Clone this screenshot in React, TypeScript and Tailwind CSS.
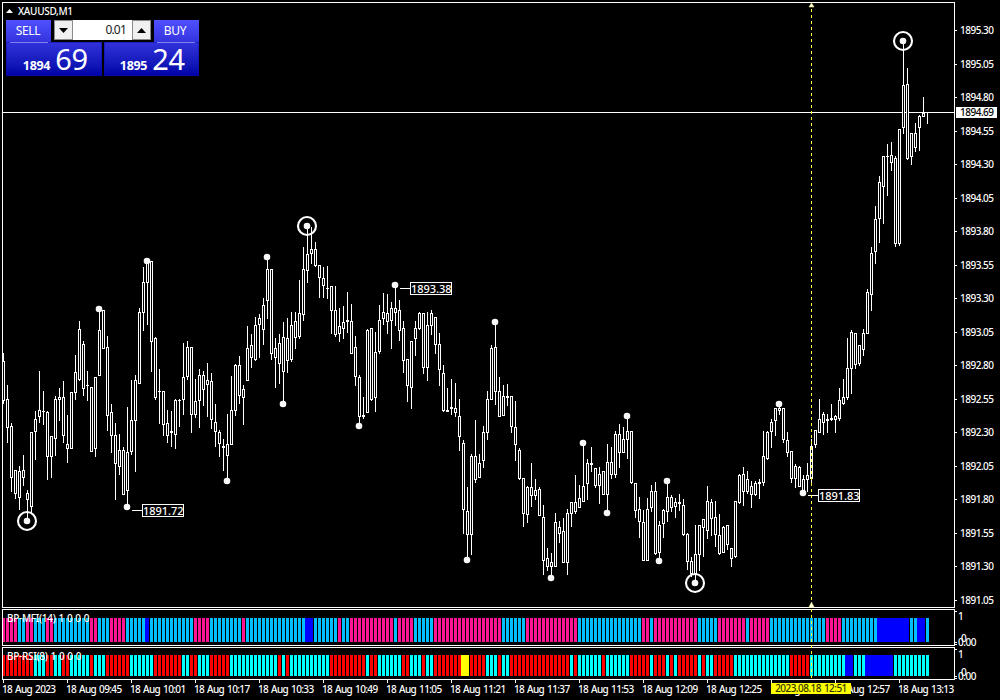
import { Fragment } from 'react';

const FIRST_X = 3;
const STEP = 4;

// [high, body top, body bottom, low] for each minute bar, in chart pixels
const candles: number[][] = [
  [353, 361, 400, 403], [385, 399, 427, 442], [423, 426, 477, 491], [470, 470, 493, 498],
  [466, 471, 497, 509], [455, 470, 477, 485], [490, 493, 499, 520], [432, 432, 506, 513],
  [411, 419, 431, 459], [371, 410, 416, 422], [391, 411, 411, 424], [411, 412, 456, 479],
  [436, 436, 456, 477], [396, 399, 438, 455], [388, 397, 399, 420], [381, 397, 435, 442],
  [415, 444, 448, 462], [392, 392, 448, 448], [355, 372, 392, 399], [321, 329, 379, 380],
  [341, 344, 388, 395], [371, 385, 385, 400], [387, 387, 451, 451], [377, 377, 448, 456],
  [310, 330, 375, 375], [310, 310, 348, 348], [336, 347, 415, 430], [404, 412, 435, 452],
  [423, 435, 463, 499], [434, 450, 466, 474], [447, 450, 494, 494], [407, 452, 490, 506],
  [380, 420, 451, 454], [375, 380, 420, 471], [308, 312, 383, 383], [267, 282, 312, 330],
  [261, 262, 282, 324], [261, 261, 341, 371], [337, 338, 397, 399], [369, 391, 391, 423],
  [391, 391, 424, 435], [410, 423, 435, 442], [411, 431, 432, 446], [399, 400, 434, 448],
  [399, 400, 400, 426], [343, 377, 399, 414], [341, 347, 376, 379], [347, 347, 414, 432],
  [379, 401, 414, 417], [369, 375, 400, 427], [371, 375, 389, 405], [363, 380, 384, 416],
  [373, 381, 419, 428], [404, 422, 431, 446], [430, 432, 443, 456], [439, 446, 447, 470],
  [414, 444, 455, 480], [376, 410, 444, 444], [364, 365, 410, 415], [356, 365, 395, 403],
  [385, 389, 397, 424], [326, 348, 380, 380], [334, 345, 357, 367], [317, 325, 359, 360],
  [314, 318, 324, 357], [298, 305, 329, 344], [257, 269, 300, 318], [269, 269, 353, 359],
  [338, 348, 357, 387], [334, 343, 363, 383], [322, 337, 371, 403], [318, 338, 360, 372],
  [312, 325, 359, 361], [312, 321, 337, 348], [280, 313, 336, 338], [247, 269, 314, 320],
  [227, 254, 270, 282], [227, 249, 253, 263], [242, 249, 265, 266], [265, 265, 277, 297],
  [267, 278, 285, 297], [266, 288, 288, 298], [286, 286, 310, 333], [286, 310, 334, 336],
  [308, 326, 333, 341], [306, 322, 328, 338], [292, 320, 321, 332], [304, 321, 353, 353],
  [336, 347, 376, 385], [375, 377, 416, 425], [397, 415, 416, 418], [329, 330, 412, 412],
  [328, 328, 399, 400], [332, 352, 397, 411], [305, 320, 351, 353], [293, 312, 318, 324],
  [294, 313, 321, 333], [302, 308, 320, 348], [285, 308, 312, 325], [300, 310, 330, 340],
  [321, 328, 360, 372], [359, 359, 385, 401], [341, 341, 387, 408], [321, 328, 338, 355],
  [312, 313, 328, 329], [313, 313, 367, 373], [312, 325, 367, 380], [310, 313, 325, 334],
  [317, 317, 344, 353], [333, 344, 369, 385], [365, 373, 410, 411], [388, 410, 411, 411],
  [379, 407, 408, 414], [383, 408, 412, 416], [399, 416, 436, 450], [440, 443, 509, 533],
  [487, 511, 534, 559], [454, 456, 534, 554], [420, 456, 479, 482], [454, 463, 477, 477],
  [426, 432, 460, 467], [391, 399, 432, 439], [345, 348, 399, 399], [322, 347, 391, 404],
  [377, 391, 416, 416], [385, 396, 415, 415], [384, 396, 397, 405], [396, 396, 426, 432],
  [401, 427, 444, 460], [448, 450, 478, 479], [478, 478, 513, 526], [486, 487, 514, 522],
  [463, 487, 495, 506], [479, 490, 495, 499], [487, 489, 515, 515], [505, 517, 560, 574],
  [548, 558, 566, 570], [553, 562, 566, 577], [513, 522, 566, 566], [521, 527, 533, 542],
  [518, 531, 562, 562], [509, 513, 562, 574], [502, 502, 513, 526], [475, 502, 511, 513],
  [485, 498, 507, 507], [443, 486, 501, 501], [459, 463, 483, 499], [447, 463, 464, 471],
  [468, 468, 485, 487], [467, 474, 485, 503], [471, 471, 494, 494], [444, 462, 494, 512],
  [447, 462, 474, 478], [431, 434, 474, 477], [424, 434, 452, 467], [427, 439, 452, 452],
  [416, 431, 439, 458], [431, 431, 482, 483], [483, 483, 510, 517], [497, 509, 521, 537],
  [510, 522, 560, 560], [498, 509, 560, 560], [485, 491, 507, 511], [482, 491, 553, 554],
  [521, 525, 552, 560], [509, 510, 523, 537], [481, 497, 511, 521], [495, 497, 507, 511],
  [498, 502, 506, 517], [494, 502, 503, 510], [499, 505, 534, 535], [533, 534, 561, 569],
  [557, 561, 573, 576], [525, 554, 573, 583], [525, 525, 554, 570], [519, 519, 527, 556],
  [486, 501, 530, 538], [499, 502, 518, 535], [501, 517, 534, 546], [514, 535, 553, 554],
  [526, 527, 552, 552], [525, 525, 544, 549], [548, 548, 558, 566], [501, 501, 556, 557],
  [474, 475, 502, 503], [467, 474, 491, 505], [471, 479, 491, 493], [481, 486, 494, 507],
  [481, 483, 494, 495], [479, 482, 483, 498], [431, 456, 482, 485], [431, 432, 458, 459],
  [419, 422, 431, 447], [408, 408, 420, 435], [405, 408, 410, 414], [408, 408, 439, 442],
  [432, 440, 452, 456], [451, 451, 478, 482], [464, 466, 478, 487], [466, 467, 486, 486],
  [475, 479, 490, 493], [463, 475, 479, 491], [439, 446, 478, 482], [430, 430, 444, 447],
  [399, 419, 432, 432], [412, 414, 422, 434], [414, 419, 420, 432], [404, 418, 419, 420],
  [415, 416, 419, 432], [388, 400, 418, 420], [379, 397, 403, 404], [338, 368, 397, 399],
  [330, 332, 368, 393], [333, 333, 364, 368], [345, 345, 363, 365], [329, 333, 349, 355],
  [289, 292, 333, 333], [247, 253, 294, 310], [206, 219, 251, 263], [176, 182, 218, 242],
  [156, 156, 186, 223], [144, 156, 156, 195], [142, 155, 162, 170], [156, 158, 243, 246],
  [129, 129, 243, 245], [42, 85, 127, 133], [68, 84, 158, 159], [133, 133, 156, 164],
  [123, 133, 147, 151], [115, 116, 127, 150], [97, 113, 116, 116], [112, 112, 112, 123],
];

const swings: [number, number, boolean?][] = [
  [27, 521, true], [99, 309], [127, 507], [147, 261], [227, 481], [267, 257], [283, 404],
  [307, 226, true], [359, 426], [395, 285], [467, 560], [495, 322], [551, 578], [583, 443],
  [607, 513], [627, 416], [659, 561], [667, 481], [695, 583, true], [779, 404], [803, 493],
  [903, 41, true],
];

const priceTags = [
  { x: 142, y: 504, text: '1891.72' },
  { x: 410, y: 282, text: '1893.38' },
  { x: 818, y: 489, text: '1891.83' },
];

// run-length encoded histogram colours
const MFI =
  'P4 S2 P2 S3 P2 S9 P2 S3 P4 S5 B1 S11 P4 S8 P1 S15 B2 S6 P1 S2 P11 S1 P4 S5 P17 S6 P13 S16 P2 S1 P11 S5 P7 S1 P5 S14 P4 S9 B8 S2 B2 S1';
const RSI =
  'R8 C3 R2 C2 R2 C5 R1 C3 R6 C6 R7 C2 R2 C3 R5 C12 R1 C1 R1 C10 R9 C1 R2 C6 R2 C3 R1 C2 R7 Y2 R4 C3 R1 C2 R15 C1 R1 C6 R1 C6 R5 C1 R3 C1 R1 C1 R5 C1 R1 C2 R5 C14 R5 C9 B2 C3 B7 C9';

const palette: Record<string, string> = {
  P: '#ff1493',
  S: '#00bfff',
  B: '#0000ff',
  R: '#ff0000',
  C: '#00ffff',
  Y: '#ffff00',
};

const prices = Array.from({ length: 18 }, (_, i) => (1895.3 - i * 0.25).toFixed(2));

const times = [
  '18 Aug 2023', '18 Aug 09:45', '18 Aug 10:01', '18 Aug 10:17', '18 Aug 10:33',
  '18 Aug 10:49', '18 Aug 11:05', '18 Aug 11:21', '18 Aug 11:37', '18 Aug 11:53',
  '18 Aug 12:09', '18 Aug 12:25', '18 Aug 12:41', '18 Aug 12:57', '18 Aug 13:13',
];

function decode(runs: string) {
  return runs.split(' ').flatMap((r) => Array(Number(r.slice(1))).fill(r[0]) as string[]);
}

function Histogram({ runs, top, y, height }: { runs: string; top: number; y: number; height: number }) {
  return (
    <svg className="block h-full w-full" viewBox={`3 ${top} 951 ${height + 11}`} preserveAspectRatio="xMinYMin slice" shapeRendering="crispEdges">
      {decode(runs).map((c, i) => {
        const wide = c === 'B' || c === 'Y';
        return (
          <rect
            key={i}
            x={FIRST_X + i * STEP - (wide ? 2 : 1)}
            y={y}
            width={wide ? 4 : 3}
            height={height}
            fill={palette[c]}
          />
        );
      })}
    </svg>
  );
}

function PriceChart() {
  return (
    <svg className="block" width="951" height="604" viewBox="3 3 951 604">
      <g shapeRendering="crispEdges" fill="#fff">
        <rect x="3" y="112" width="951" height="1" />
        {candles.map(([h, t, b, l], i) => {
          const x = FIRST_X + i * STEP;
          return (
            <Fragment key={i}>
              <rect x={x} y={h} width="1" height={l - h + 1} />
              <rect x={x - 1} y={t} width="3" height={b - t + 1} />
              {b - t > 1 && <rect x={x} y={t + 1} width="1" height={b - t - 1} fill="#000" />}
            </Fragment>
          );
        })}
      </g>
      {swings.map(([x, y, ring]) => (
        <g key={x}>
          <circle cx={x} cy={y} r="3.3" fill="#f8f8f8" />
          {ring && <circle cx={x} cy={y} r="9" fill="none" stroke="#fff" strokeWidth="2.1" />}
        </g>
      ))}
      {priceTags.map(({ x, y, text }) => (
        <g key={text}>
          <rect x={x - 10} y={y + 6} width="10" height="1" fill="#fff" />
          <rect x={x + 0.5} y={y + 0.5} width="41" height="12" fill="#000" stroke="#fff" />
          <text x={x + 1} y={y + 11} fontSize="11" textLength="40" fill="#fff">
            {text}
          </text>
        </g>
      ))}
    </svg>
  );
}

function Spin({ up }: { up?: boolean }) {
  return (
    <button className="flex h-5 w-[19px] items-center justify-center border border-[#8c8c8c] bg-[#f0f0f0]">
      <svg width="9" height="5" viewBox="0 0 9 5">
        <path d={up ? 'M0 5L4.5 0L9 5Z' : 'M0 0L4.5 5L9 0Z'} fill="#000" />
      </svg>
    </button>
  );
}

function Quote({ small, big }: { small: string; big: string }) {
  return (
    <div className="flex h-[34px] items-baseline justify-end bg-linear-to-b from-[#3232dc] to-[#0000a6] pr-[14px] shadow-[inset_0_0_0_1px_#0c0cae80]">
      <span className="mr-[5px] text-[12.5px] font-bold tracking-[-0.3px]">{small}</span>
      <span className="text-[29px] leading-[34px] tracking-[-0.2px]">{big}</span>
    </div>
  );
}

function TradePanel() {
  return (
    <div className="absolute top-[17px] left-[3px] w-[193px] font-normal text-white">
      <div className="flex h-[22px] justify-between">
        <button className="w-[45px] bg-linear-to-b from-[#5050ff] to-[#3434de] pr-px text-center text-xs leading-[22px] tracking-[-0.3px]">SELL</button>
        <div className="flex h-5 bg-white">
          <Spin />
          <div className="w-[59px] pr-[6px] text-right text-[12px] leading-[20px] tracking-[-0.8px] text-[#222]">0.01</div>
          <Spin up />
        </div>
        <button className="w-[45px] bg-linear-to-b from-[#5050ff] to-[#3434de] pr-[3px] text-center text-xs leading-[22px] tracking-[-0.3px]">BUY</button>
      </div>
      <div className="grid grid-cols-[96px_95px] gap-[2px]">
        <Quote small="1894" big="69" />
        <Quote small="1895" big="24" />
      </div>
      <div className="absolute top-[22px] left-1 h-px w-[38px] bg-[#8080f4]" />
      <div className="absolute top-[22px] right-1 h-px w-[38px] bg-[#8080f4]" />
    </div>
  );
}

function Scale() {
  return (
    <div className="relative flex-1 text-white">
      <span className="absolute top-px left-[3px] leading-[13px]">1</span>
      <span className="absolute bottom-px left-[6px] leading-[13px]">0</span>
      <span className="absolute bottom-[-3px] left-[3px] leading-[13px]">0.00</span>
      <div className="absolute top-[2px] left-0 h-px w-[2px] bg-white" />
      <div className="absolute bottom-[3px] left-0 h-px w-[2px] bg-white" />
      <div className="absolute bottom-[1px] left-0 h-px w-[2px] bg-white" />
    </div>
  );
}

export default function App() {
  return (
    <div className="relative h-[700px] w-[1000px] overflow-hidden bg-black pt-[2px] pl-[2px] font-['Noto_Sans',sans-serif] text-[10px] font-medium tracking-[-0.5px] text-white">
      <div className="flex h-[606px]">
        <div className="relative w-[953px] border border-white">
          <PriceChart />
          <div className="absolute top-px left-[3px] flex items-center gap-[5px] leading-[14px] tracking-[-0.3px]">
            <svg width="7" height="4" viewBox="0 0 7 4">
              <path d="M0 4L3.5 0L7 4Z" fill="#fff" />
            </svg>
            XAUUSD,M1
          </div>
          <TradePanel />
        </div>
        <div className="relative flex-1">
          <div className="flex h-full flex-col justify-between pt-[22px] pb-[1px]">
            {prices.map((p) => (
              <div key={p} className="flex h-[13px] items-center gap-[3px] leading-[13px]">
                <i className="h-px w-[2px] bg-white" />
                {p}
              </div>
            ))}
          </div>
          <div className="absolute top-[105px] left-[1px] h-[11px] w-[41px] bg-white pl-1 leading-[11px] text-black">1894.69</div>
        </div>
      </div>

      <div className="mt-px flex h-[37px]">
        <div className="relative w-[953px] border border-white">
          <Histogram runs={MFI} top={610} y={618} height={24} />
          <span className="absolute top-[2px] left-1 leading-[13px] tracking-[-0.3px] [word-spacing:0.7px]">BP-MFI(14) 1 0 0 0</span>
        </div>
        <Scale />
      </div>

      <div className="mt-px flex h-[33px]">
        <div className="relative w-[953px] border border-white">
          <Histogram runs={RSI} top={648} y={655} height={21} />
          <span className="absolute top-[2px] left-1 leading-[13px] tracking-[-0.3px] [word-spacing:0.7px]">BP-RSI(8) 1 0 0 0</span>
        </div>
        <Scale />
      </div>

      <div className="flex pl-px">
        {times.map((t) => (
          <div key={t} className="w-16 shrink-0 whitespace-nowrap">
            <div className="h-[3px] w-px bg-white" />
            <div className="-ml-px leading-[13px] tracking-[-0.65px] [word-spacing:1px]">{t}</div>
          </div>
        ))}
      </div>

      {/* period marker running through all panes */}
      <svg className="absolute top-0 left-[806px]" width="11" height="680" viewBox="806 0 11 680">
        <path d="M811.5 9V679" stroke="#ffff33" strokeDasharray="3 3" shapeRendering="crispEdges" />
        <path d="M809 7L811.5 3L814 7Z" fill="#fff" stroke="#ffff66" strokeWidth="0.5" />
        <path d="M809 607L811.5 602L814 607Z" fill="#fff" stroke="#ffff66" strokeWidth="0.5" />
      </svg>
      <div className="absolute top-[683px] left-[771px] h-[11px] w-20 bg-[#ffff00] text-center leading-[11px] tracking-[-0.55px] text-[#333300] [word-spacing:1px]">2023.08.18 12:51</div>
    </div>
  );
}
